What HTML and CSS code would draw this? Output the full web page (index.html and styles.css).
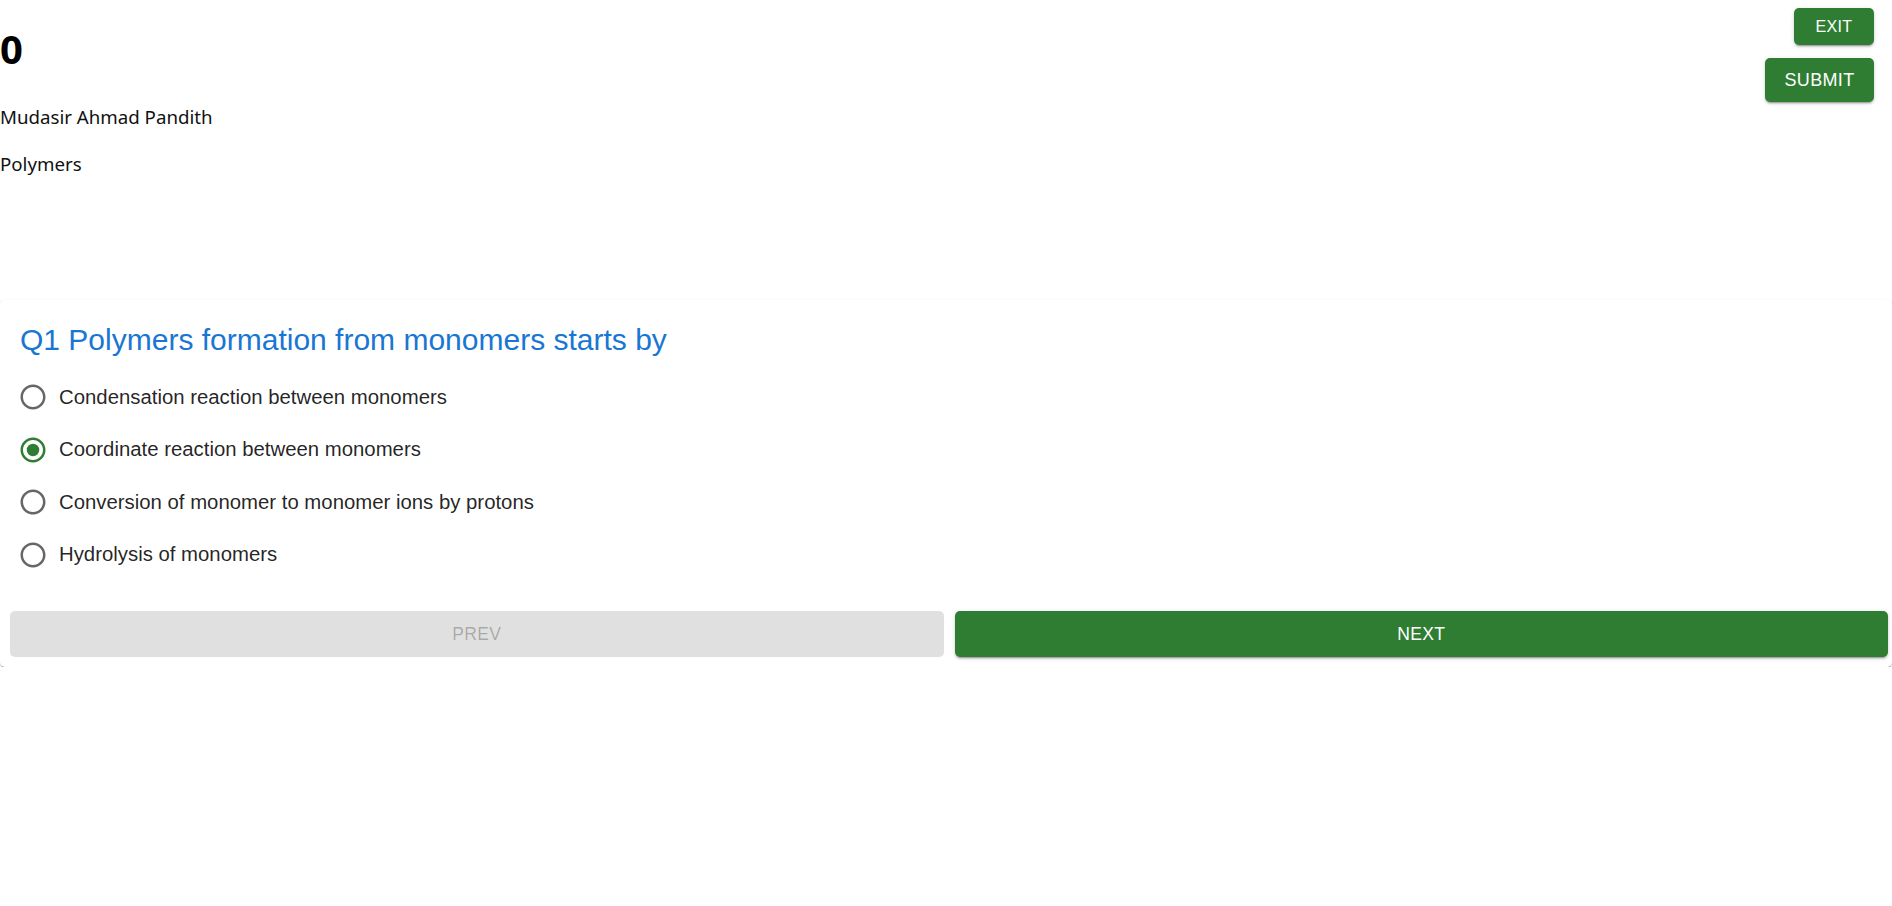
FILE: index.html
```html
<!DOCTYPE html>
<html lang="en">
<head>
<meta charset="utf-8">
<title>Quiz</title>
<link rel="stylesheet" href="styles.css">
</head>
<body>
<div class="page">
  <header class="top">
    <div class="info">
      <h1 class="score">0</h1>
      <p class="line">Mudasir Ahmad Pandith</p>
      <p class="line last">Polymers</p>
    </div>
    <div class="actions-top">
      <button class="btn btn-green btn-small">Exit</button>
      <button class="btn btn-green btn-medium">Submit</button>
    </div>
  </header>

  <section class="card">
    <div class="card-content">
      <h2 class="question">Q1 Polymers formation from monomers starts by</h2>
      <div class="options">
        <label class="option">
          <svg class="radio" viewBox="0 0 24 24"><path d="M12 2C6.48 2 2 6.48 2 12s4.48 10 10 10 10-4.48 10-10S17.52 2 12 2zm0 18c-4.42 0-8-3.58-8-8s3.58-8 8-8 8 3.58 8 8-3.58 8-8 8z"/></svg>
          <span>Condensation reaction between monomers</span>
        </label>
        <label class="option">
          <svg class="radio checked" viewBox="0 0 24 24"><path d="M12 2C6.48 2 2 6.48 2 12s4.48 10 10 10 10-4.48 10-10S17.52 2 12 2zm0 18c-4.42 0-8-3.58-8-8s3.58-8 8-8 8 3.58 8 8-3.58 8-8 8z"/><circle cx="12" cy="12" r="5"/></svg>
          <span>Coordinate reaction between monomers</span>
        </label>
        <label class="option">
          <svg class="radio" viewBox="0 0 24 24"><path d="M12 2C6.48 2 2 6.48 2 12s4.48 10 10 10 10-4.48 10-10S17.52 2 12 2zm0 18c-4.42 0-8-3.58-8-8s3.58-8 8-8 8 3.58 8 8-3.58 8-8 8z"/></svg>
          <span>Conversion of monomer to monomer ions by protons</span>
        </label>
        <label class="option">
          <svg class="radio" viewBox="0 0 24 24"><path d="M12 2C6.48 2 2 6.48 2 12s4.48 10 10 10 10-4.48 10-10S17.52 2 12 2zm0 18c-4.42 0-8-3.58-8-8s3.58-8 8-8 8 3.58 8 8-3.58 8-8 8z"/></svg>
          <span>Hydrolysis of monomers</span>
        </label>
      </div>
    </div>
    <div class="card-actions">
      <button class="btn btn-wide btn-disabled" disabled>Prev</button>
      <button class="btn btn-wide btn-green">Next</button>
    </div>
  </section>
</div>
</body>
</html>
```

FILE: styles.css
```css
* { box-sizing: border-box; }

html, body {
  margin: 0;
  padding: 0;
  background: #fff;
}

body {
  font-family: "Noto Sans", "Open Sans", sans-serif;
  color: #000;
}

.top {
  display: flex;
  justify-content: space-between;
  align-items: flex-start;
}

.info {
  display: flex;
  flex-direction: column;
}

.score {
  margin: 25px 0 30px;
  font-size: 40px;
  line-height: 48px;
  font-weight: 700;
}

.line {
  margin: 0 0 20px;
  font-size: 18.7px;
  line-height: 27px;
  color: #111;
}

.line.last { margin-bottom: 0; }

.actions-top {
  display: flex;
  flex-direction: column;
  align-items: flex-end;
  gap: 13px;
  padding: 8px 18px 0 0;
}

.btn {
  font-family: "Liberation Sans", Arial, sans-serif;
  text-transform: uppercase;
  border: 0;
  border-radius: 5px;
  cursor: pointer;
  letter-spacing: 0.02em;
}

.btn-green {
  background: #2e7d32;
  color: #fff;
  box-shadow: 0 3px 1px -2px rgba(0,0,0,0.2), 0 2px 2px 0 rgba(0,0,0,0.14), 0 1px 5px 0 rgba(0,0,0,0.12);
}

.btn-small {
  width: 80px;
  height: 37px;
  font-size: 16px;
  padding: 0;
}

.btn-medium {
  width: 109px;
  height: 44px;
  font-size: 18px;
  padding: 0;
}

.card {
  margin-top: 123px;
  background: #fff;
  border-radius: 5px;
  box-shadow: 0 2px 1px -1px rgba(0,0,0,0.2), 0 1px 1px 0 rgba(0,0,0,0.14), 0 1px 3px 0 rgba(0,0,0,0.12);
}

.card-content {
  padding: 20px 20px 20px;
}

.question {
  margin: 0 0 11px;
  font-family: "Liberation Sans", Arial, sans-serif;
  font-weight: 400;
  font-size: 30px;
  line-height: 40px;
  color: #1976d2;
}

.options {
  display: flex;
  flex-direction: column;
}

.option {
  display: flex;
  align-items: center;
  height: 52.5px;
  margin-left: -2px;
  gap: 11px;
  font-family: "Liberation Sans", Arial, sans-serif;
  font-size: 20.35px;
  color: rgba(0,0,0,0.87);
  cursor: pointer;
}

.radio {
  width: 30px;
  height: 30px;
  fill: rgba(0,0,0,0.6);
  flex: none;
}

.radio.checked { fill: #2e7d32; }

.card-actions {
  display: flex;
  gap: 11px;
  padding: 10px 4px 10px 10px;
}

.btn-wide {
  flex: 1;
  height: 46px;
  font-size: 17.5px;
}

.btn-disabled {
  background: #e0e0e0;
  color: rgba(0,0,0,0.26);
  cursor: default;
}
```
